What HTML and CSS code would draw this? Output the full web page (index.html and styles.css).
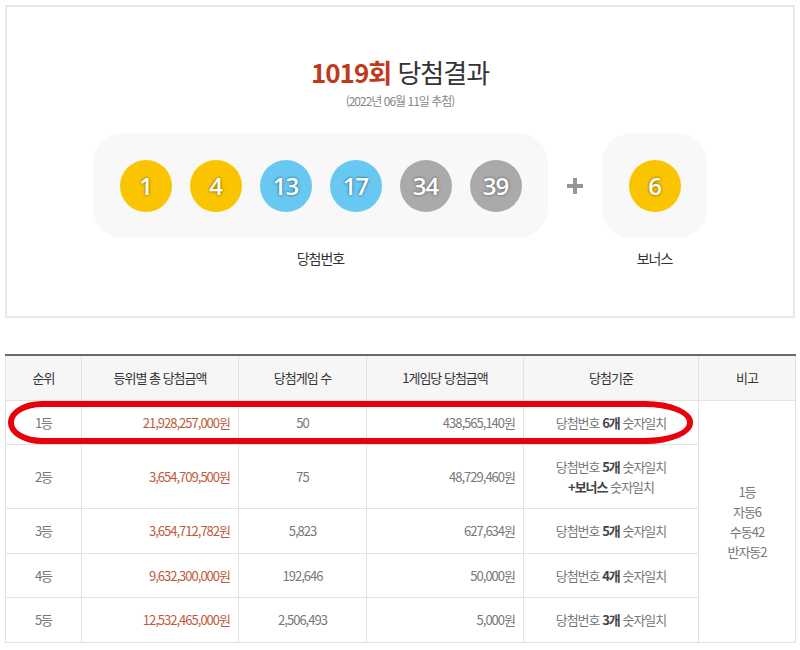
FILE: index.html
```html
<!DOCTYPE html>
<html lang="ko">
<head>
  <meta charset="UTF-8">
  <title>1019회 당첨결과</title>
  <link rel="stylesheet" href="styles.css">
</head>
<body>
  <div class="page">
    <div class="result-box">
      <h2 class="title"><strong>1019회</strong> 당첨결과</h2>
      <p class="date">(2022년 06월 11일 추첨)</p>

      <div class="draw">
        <div class="group">
          <div class="balls num-box">
            <span class="ball yellow">1</span>
            <span class="ball yellow">4</span>
            <span class="ball blue">13</span>
            <span class="ball blue">17</span>
            <span class="ball gray">34</span>
            <span class="ball gray">39</span>
          </div>
          <p class="label">당첨번호</p>
        </div>
        <div class="plus">
          <svg width="18" height="18" viewBox="0 0 18 18">
            <path d="M9 1v16M1 9h16" stroke="#959595" stroke-width="4"/>
          </svg>
        </div>
        <div class="group">
          <div class="balls bonus-box">
            <span class="ball yellow">6</span>
          </div>
          <p class="label">보너스</p>
        </div>
      </div>
    </div>

    <div class="table-wrap">
      <table class="prize">
        <colgroup>
          <col class="c-rank">
          <col class="c-total">
          <col class="c-count">
          <col class="c-each">
          <col class="c-rule">
          <col class="c-note">
        </colgroup>
        <thead>
          <tr>
            <th>순위</th>
            <th>등위별 총 당첨금액</th>
            <th>당첨게임 수</th>
            <th>1게임당 당첨금액</th>
            <th>당첨기준</th>
            <th>비고</th>
          </tr>
        </thead>
        <tbody>
          <tr class="r1">
            <td>1등</td>
            <td class="money">21,928,257,000원</td>
            <td>50</td>
            <td class="right">438,565,140원</td>
            <td>당첨번호 <b>6개</b> 숫자일치</td>
            <td class="note" rowspan="5">1등<br>자동6<br>수동42<br>반자동2</td>
          </tr>
          <tr class="r2">
            <td>2등</td>
            <td class="money">3,654,709,500원</td>
            <td>75</td>
            <td class="right">48,729,460원</td>
            <td>당첨번호 <b>5개</b> 숫자일치<br><b>+보너스</b> 숫자일치</td>
          </tr>
          <tr class="r3">
            <td>3등</td>
            <td class="money">3,654,712,782원</td>
            <td>5,823</td>
            <td class="right">627,634원</td>
            <td>당첨번호 <b>5개</b> 숫자일치</td>
          </tr>
          <tr class="r4">
            <td>4등</td>
            <td class="money">9,632,300,000원</td>
            <td>192,646</td>
            <td class="right">50,000원</td>
            <td>당첨번호 <b>4개</b> 숫자일치</td>
          </tr>
          <tr class="r5">
            <td>5등</td>
            <td class="money">12,532,465,000원</td>
            <td>2,506,493</td>
            <td class="right">5,000원</td>
            <td>당첨번호 <b>3개</b> 숫자일치</td>
          </tr>
        </tbody>
      </table>
      <div class="highlight"></div>
    </div>
  </div>
</body>
</html>
```

FILE: styles.css
```css
body {
  margin: 0;
  background: #fff;
  font-family: "Noto Sans CJK KR", "Noto Sans", sans-serif;
  color: #666;
}
.page {
  padding: 5px 5px 0;
  width: 790px;
}
.result-box {
  border: 2px solid #e8e8e8;
  padding: 49px 0 48px;
  text-align: center;
}
.title {
  margin: 0;
  font-size: 26px;
  line-height: 32px;
  font-weight: 400;
  color: #333;
  letter-spacing: -1px;
}
.title strong {
  color: #c1391c;
  font-weight: 700;
}
.date {
  margin: 4px 0 0;
  font-size: 12px;
  line-height: 18px;
  color: #888;
  letter-spacing: -1px;
}
.draw {
  display: flex;
  justify-content: center;
  margin-top: 23px;
}
.balls {
  display: flex;
  align-items: center;
  justify-content: center;
  gap: 18px;
  height: 105px;
  background: #f8f8f8;
  border-radius: 30px;
}
.num-box {
  width: 455px;
}
.bonus-box {
  width: 105px;
}
.ball {
  width: 52px;
  height: 52px;
  border-radius: 50%;
  color: #fff;
  font-family: "Open Sans", sans-serif;
  font-size: 24px;
  font-weight: 600;
  line-height: 52px;
  text-align: center;
  letter-spacing: -1px;
}
.yellow {
  background: #fbc400;
  text-shadow: 0 0 3px rgba(73, 57, 0, 0.8);
}
.blue {
  background: #69c8f2;
  text-shadow: 0 0 3px rgba(0, 49, 70, 0.8);
}
.gray {
  background: #aaa;
  text-shadow: 0 0 3px rgba(61, 61, 61, 0.8);
}
.plus {
  width: 54px;
  height: 105px;
  display: flex;
  align-items: center;
  justify-content: center;
}
.label {
  margin: 10px 0 0;
  font-size: 14px;
  line-height: 20px;
  color: #333;
  letter-spacing: -1px;
}

.table-wrap {
  position: relative;
  margin-top: 36px;
}
.prize {
  width: 790px;
  table-layout: fixed;
  border-collapse: collapse;
  border-top: 2px solid #6b6b6b;
  font-size: 13px;
  letter-spacing: -1px;
}
.c-rank { width: 76px; }
.c-total { width: 157px; }
.c-count { width: 128px; }
.c-each { width: 157px; }
.c-rule { width: 175px; }
.c-note { width: 97px; }
.prize th,
.prize td {
  border: 1px solid #e2e2e2;
  padding: 0 8px;
  text-align: center;
  font-weight: 400;
  line-height: 20px;
}
.prize th {
  height: 44px;
  background: #f6f6f6;
  color: #333;
}
.prize td {
  color: #777;
}
.prize b {
  color: #444;
  font-weight: 700;
}
.prize .money {
  text-align: right;
  color: #c05a3b;
}
.prize .right {
  text-align: right;
}
.r1 td { height: 43px; }
.r2 td { height: 63px; }
.r3 td { height: 44px; }
.r4 td { height: 43px; }
.r5 td { height: 44px; }
.prize .note {
  vertical-align: middle;
}

/* red marker drawn over the 1st prize row */
.highlight {
  position: absolute;
  left: 3px;
  top: 47px;
  width: 673px;
  height: 31px;
  border: 6px solid #e8000a;
  border-radius: 34px 48px 48px 34px / 21px;
}
```
